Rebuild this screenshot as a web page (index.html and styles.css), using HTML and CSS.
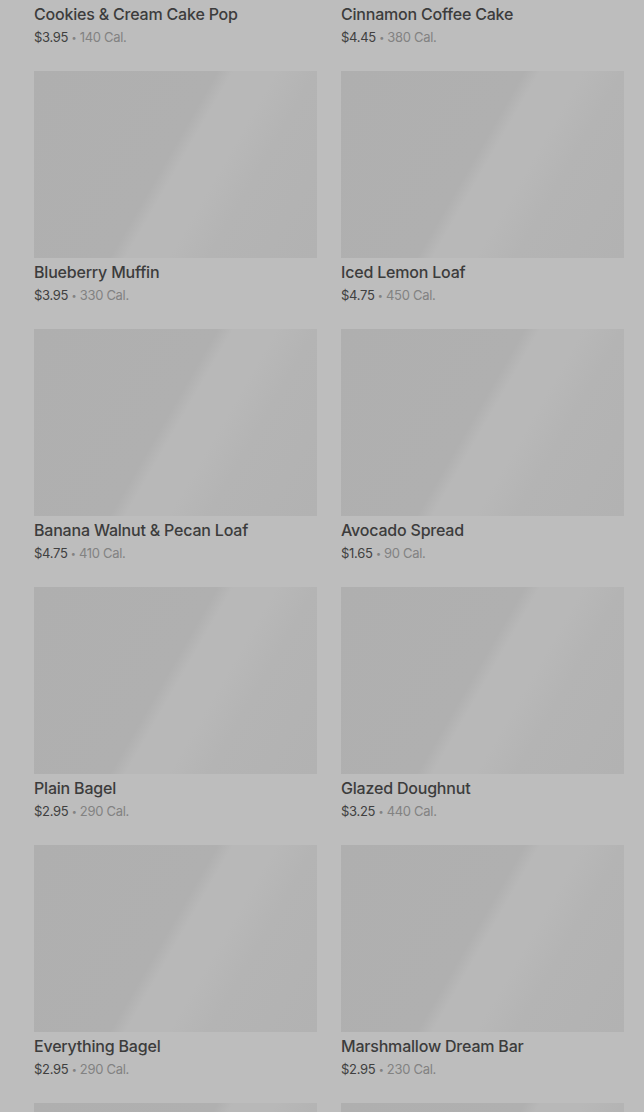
FILE: index.html
```html
<!DOCTYPE html>
<html>
    <head>
        <meta charset="utf-8">
        <meta name="viewport" content="width=device-width, initial-scale=1.0">
        <title>Bakery</title>

        <link rel="stylesheet" href="styles.css">
    </head>
    <body>
        <div class="menu">
            <div class="menu-grid">
                <div class="item">
                    <div class="item-image"></div>
                    <div class="item-name">Cookies &amp; Cream Cake Pop</div>
                    <div class="item-meta"><span class="price">$3.95</span> <span class="dot">&bull;</span> 140 Cal.</div>
                </div>
                <div class="item">
                    <div class="item-image"></div>
                    <div class="item-name">Cinnamon Coffee Cake</div>
                    <div class="item-meta"><span class="price">$4.45</span> <span class="dot">&bull;</span> 380 Cal.</div>
                </div>
                <div class="item">
                    <div class="item-image"></div>
                    <div class="item-name">Blueberry Muffin</div>
                    <div class="item-meta"><span class="price">$3.95</span> <span class="dot">&bull;</span> 330 Cal.</div>
                </div>
                <div class="item">
                    <div class="item-image"></div>
                    <div class="item-name">Iced Lemon Loaf</div>
                    <div class="item-meta"><span class="price">$4.75</span> <span class="dot">&bull;</span> 450 Cal.</div>
                </div>
                <div class="item">
                    <div class="item-image"></div>
                    <div class="item-name">Banana Walnut &amp; Pecan Loaf</div>
                    <div class="item-meta"><span class="price">$4.75</span> <span class="dot">&bull;</span> 410 Cal.</div>
                </div>
                <div class="item">
                    <div class="item-image"></div>
                    <div class="item-name">Avocado Spread</div>
                    <div class="item-meta"><span class="price">$1.65</span> <span class="dot">&bull;</span> 90 Cal.</div>
                </div>
                <div class="item">
                    <div class="item-image"></div>
                    <div class="item-name">Plain Bagel</div>
                    <div class="item-meta"><span class="price">$2.95</span> <span class="dot">&bull;</span> 290 Cal.</div>
                </div>
                <div class="item">
                    <div class="item-image"></div>
                    <div class="item-name">Glazed Doughnut</div>
                    <div class="item-meta"><span class="price">$3.25</span> <span class="dot">&bull;</span> 440 Cal.</div>
                </div>
                <div class="item">
                    <div class="item-image"></div>
                    <div class="item-name">Everything Bagel</div>
                    <div class="item-meta"><span class="price">$2.95</span> <span class="dot">&bull;</span> 290 Cal.</div>
                </div>
                <div class="item">
                    <div class="item-image"></div>
                    <div class="item-name">Marshmallow Dream Bar</div>
                    <div class="item-meta"><span class="price">$2.95</span> <span class="dot">&bull;</span> 230 Cal.</div>
                </div>
                <!-- next row, only the top of the pictures is in view -->
                <div class="item">
                    <div class="item-image"></div>
                </div>
                <div class="item">
                    <div class="item-image"></div>
                </div>
            </div>
        </div>
    </body>
</html>
```

FILE: styles.css
```css
:root {
    --bg: rgb(189, 189, 189);
    --title: rgb(60, 60, 60);
    --price: rgb(64, 64, 64);
    --muted: rgb(130, 130, 130);
}

body {
    background-color: var(--bg);
    font-family: Inter, "Noto Sans", sans-serif;
    margin: 0;
    height: 1112px;
    overflow: hidden;
}

/* the list is scrolled: first row's image is above the fold */
.menu {
    margin-top: -187px;
    padding: 0 20px 0 34px;
}

.menu-grid {
    display: grid;
    grid-template-columns: 283px 283px;
    column-gap: 24px;
    row-gap: 25px;
}

.item-image {
    height: 187px;
    background-color: rgb(176, 176, 176);
    background-image: linear-gradient(120deg,
        rgb(175, 175, 175) 0%,
        rgb(176, 176, 176) 47%,
        rgb(184, 184, 184) 51%,
        rgb(184, 184, 184) 62%,
        rgb(180, 180, 180) 72%,
        rgb(178, 178, 178) 100%);
}

.item-name {
    margin-top: 4px;
    font-size: 16px;
    line-height: 20px;
    font-weight: 500;
    letter-spacing: -0.2px;
    color: var(--title);
}

.item-meta {
    margin-top: 4px;
    height: 18px;
    font-size: 13px;
    line-height: 18px;
    letter-spacing: -0.3px;
    color: var(--muted);
}

.price {
    color: var(--price);
}

.dot {
    font-size: 9px;
    line-height: 0;
    vertical-align: 1px;
}
```
